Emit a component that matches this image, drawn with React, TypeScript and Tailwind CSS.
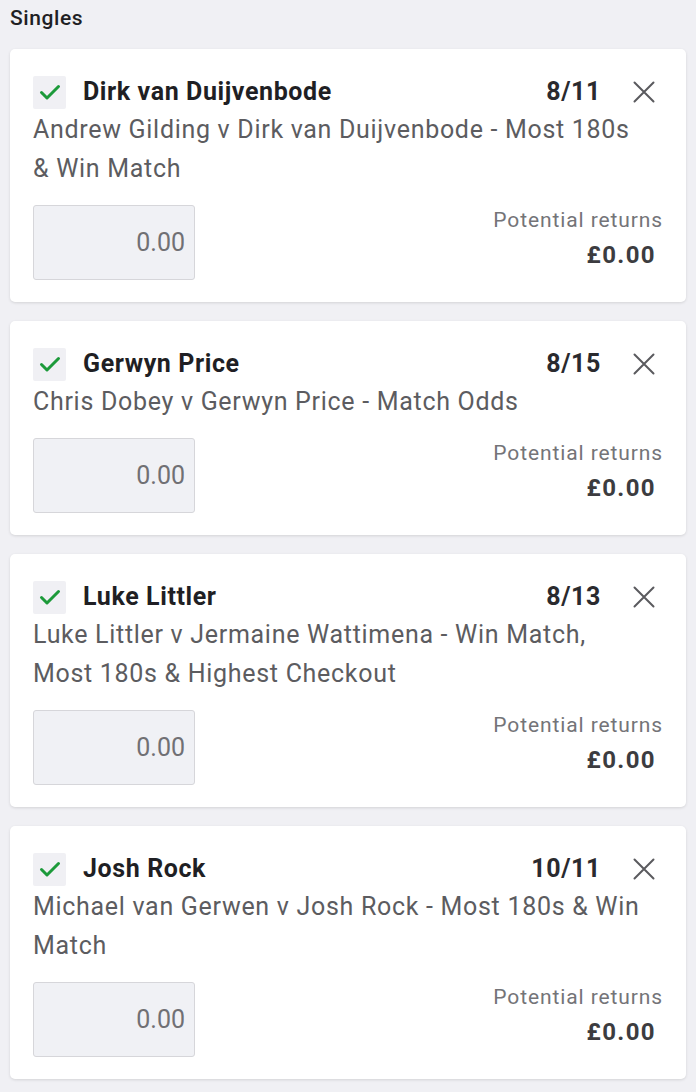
import React from "react";

type Bet = { name: string; odds: string; desc: string };

const bets: Bet[] = [
  { name: "Dirk van Duijvenbode", odds: "8/11", desc: "Andrew Gilding v Dirk van Duijvenbode - Most 180s & Win Match" },
  { name: "Gerwyn Price", odds: "8/15", desc: "Chris Dobey v Gerwyn Price - Match Odds" },
  { name: "Luke Littler", odds: "8/13", desc: "Luke Littler v Jermaine Wattimena - Win Match, Most 180s & Highest Checkout" },
  { name: "Josh Rock", odds: "10/11", desc: "Michael van Gerwen v Josh Rock - Most 180s & Win Match" },
];

function Card({ bet }: { bet: Bet }) {
  return (
    <div className="bg-white rounded-[5px] shadow-[0_1px_3px_rgba(0,0,0,0.12)] pl-[23px] pr-[23px] pt-[26px] pb-[22px]">
      <div className="flex items-center h-[34px]">
        <div className="w-[33px] h-[33px] bg-[#f0f0f4] rounded-[2px] flex items-center justify-center shrink-0">
          <svg width="24" height="24" viewBox="0 0 24 24" fill="none" stroke="#1c9a3a" strokeWidth="3" strokeLinecap="round" strokeLinejoin="round">
            <path d="M3.5 12.5l5.5 5.5L20.5 6.5" />
          </svg>
        </div>
        <div className="ml-[17px] text-[25px] tracking-[0.6px] font-bold text-[#1f1f24] flex-1 leading-[30px]">{bet.name}</div>
        <div className="text-[25px] tracking-[0.6px] font-bold text-[#2a2a2e] leading-[30px]">{bet.odds}</div>
        <div className="ml-[30px] w-[26px] h-[26px] flex items-center justify-center mr-[6px]">
          <svg width="22" height="22" viewBox="0 0 22 22" stroke="#5a5a5e" strokeWidth="2" strokeLinecap="round">
            <path d="M1.5 1.5L20.5 20.5M20.5 1.5L1.5 20.5" />
          </svg>
        </div>
      </div>
      <div className="text-[25px] tracking-[0.7px] leading-[39px] text-[#5c5c60] mt-[1px] pr-[15px]">{bet.desc}</div>
      <div className="flex justify-between mt-[17px]">
        <div className="w-[162px] h-[75px] bg-[#f0f1f5] border border-[#d6d6da] rounded-[3px] flex items-center justify-end pr-[9px] text-[25px] text-[#707074]">
          0.00
        </div>
        <div className="flex flex-col items-end">
          <div className="text-[21px] tracking-[0.9px] leading-[28px] text-[#747478] mt-[1px]">Potential returns</div>
          <div className="text-[24px] tracking-[1.4px] leading-[36px] font-bold text-[#3c3c40] mr-[7px] mt-[3px]">£0.00</div>
        </div>
      </div>
    </div>
  );
}

export default function App() {
  return (
    <div className="w-[696px] h-[1092px] bg-[#f0f0f4] px-[10px] pt-[5px] overflow-hidden" style={{ fontFamily: "Roboto, 'Liberation Sans', sans-serif" }}>
      <div className="text-[21px] tracking-[0.6px] leading-[26px] font-medium text-[#1f1f24] mb-[18px]">Singles</div>
      <div className="flex flex-col gap-[19px]">
        {bets.map((b) => (
          <Card key={b.name} bet={b} />
        ))}
      </div>
    </div>
  );
}
